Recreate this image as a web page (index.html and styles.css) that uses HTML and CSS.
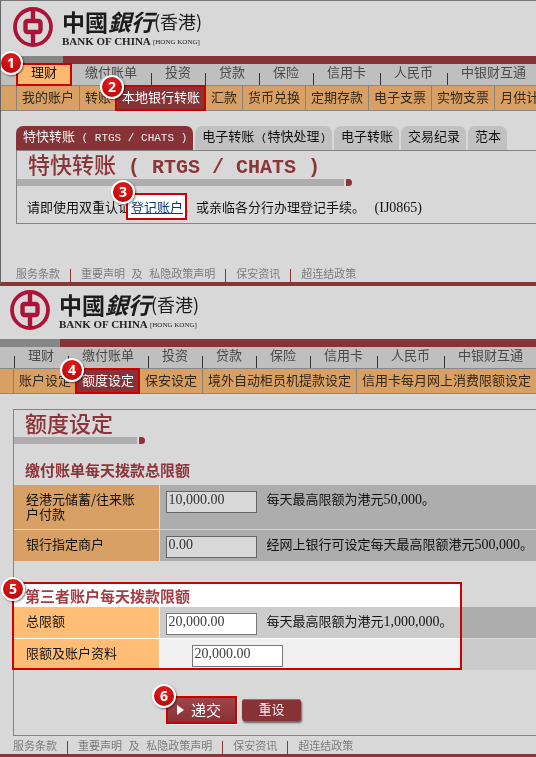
FILE: index.html
```html
<!DOCTYPE html>
<html lang="zh-CN">
<head>
<meta charset="utf-8">
<meta name="viewport" content="width=device-width, initial-scale=1">
<title>中国银行(香港)</title>
<link rel="stylesheet" href="styles.css">
</head>
<body>
<section class="panel panel-transfer">
  <header class="brand">
    <svg class="brand-mark" viewBox="0 0 40 40" aria-hidden="true">
      <circle cx="20" cy="20" r="18" fill="none" stroke="#ac1339" stroke-width="3.8"/>
      <rect x="12.5" y="14" width="15" height="11" rx="2" fill="none" stroke="#ac1339" stroke-width="4.4"/>
      <path d="M20 2v11M20 26v12" stroke="#ac1339" stroke-width="4.4"/>
    </svg>
    <div class="brand-text">
      <div class="brand-zh"><span class="brush">中國</span><span class="brush slant">銀行</span><span class="region">(香港)</span></div>
      <div class="brand-en">BANK OF CHINA <small>[HONG KONG]</small></div>
    </div>
  </header>
  <div class="strip"></div>
  <nav class="main-nav">
    <a class="current" href="#">理财<span class="badge">1</span></a>
    <a href="#">缴付账单</a>
    <a href="#">投资</a>
    <a href="#">贷款</a>
    <a href="#">保险</a>
    <a href="#">信用卡</a>
    <a href="#">人民币</a>
    <a href="#">中银财互通</a>
  </nav>
  <nav class="sub-nav">
    <a href="#">我的账户</a>
    <a href="#">转账</a>
    <a class="current" href="#">本地银行转账<span class="badge">2</span></a>
    <a href="#">汇款</a>
    <a href="#">货币兑换</a>
    <a href="#">定期存款</a>
    <a href="#">电子支票</a>
    <a href="#">实物支票</a>
    <a href="#">月供计</a>
  </nav>
  <main class="content">
    <div class="tabs">
      <a class="tab current" href="#">特快转账<span class="latin"> ( RTGS / CHATS )</span></a>
      <a class="tab" href="#">电子转账<span class="latin"> (</span>特快处理<span class="latin">)</span></a>
      <a class="tab" href="#">电子转账</a>
      <a class="tab" href="#">交易纪录</a>
      <a class="tab" href="#">范本</a>
    </div>
    <div class="box">
      <h1 class="title">特快转账<span class="title-latin"> ( RTGS / CHATS )</span></h1>
      <p class="message">请即使用双重认证<a class="register" href="#"><span class="register-text">登记账户</span><span class="badge">3</span></a><span class="stop">，</span>或亲临各分行办理登记手续<span class="stop">。</span><span class="num"> (IJ0865)</span></p>
    </div>
  </main>
  <footer class="footer">
    <a href="#">服务条款</a><a href="#">重要声明 及 私隐政策声明</a><a href="#">保安资讯</a><a href="#">超连结政策</a>
  </footer>
</section>

<section class="panel panel-limit">
  <header class="brand">
    <svg class="brand-mark" viewBox="0 0 40 40" aria-hidden="true">
      <circle cx="20" cy="20" r="18" fill="none" stroke="#ac1339" stroke-width="3.8"/>
      <rect x="12.5" y="14" width="15" height="11" rx="2" fill="none" stroke="#ac1339" stroke-width="4.4"/>
      <path d="M20 2v11M20 26v12" stroke="#ac1339" stroke-width="4.4"/>
    </svg>
    <div class="brand-text">
      <div class="brand-zh"><span class="brush">中國</span><span class="brush slant">銀行</span><span class="region">(香港)</span></div>
      <div class="brand-en">BANK OF CHINA <small>[HONG KONG]</small></div>
    </div>
  </header>
  <div class="strip"></div>
  <nav class="main-nav">
    <a href="#">理财</a>
    <a href="#">缴付账单</a>
    <a href="#">投资</a>
    <a href="#">贷款</a>
    <a href="#">保险</a>
    <a href="#">信用卡</a>
    <a href="#">人民币</a>
    <a href="#">中银财互通</a>
  </nav>
  <nav class="sub-nav">
    <a href="#">账户设定</a>
    <a class="current" href="#">额度设定<span class="badge">4</span></a>
    <a href="#">保安设定</a>
    <a href="#">境外自动柜员机提款设定</a>
    <a href="#">信用卡每月网上消费限额设定</a>
  </nav>
  <main class="content">
    <form class="box">
      <h1 class="title">额度设定</h1>
      <h2 class="group-title">缴付账单每天拨款总限额</h2>
      <table class="limits">
        <tr>
          <th scope="row"><label for="savings">经港元储蓄/往来账户付款</label></th>
          <td><div class="field"><input id="savings" type="text" value="10,000.00"><span class="note">每天最高限额为港元<span class="num">50,000</span><span class="stop">。</span></span></div></td>
        </tr>
        <tr>
          <th scope="row"><label for="merchant">银行指定商户</label></th>
          <td><div class="field"><input id="merchant" type="text" value="0.00"><span class="note">经网上银行可设定每天最高限额港元<span class="num">500,000</span><span class="stop">。</span></span></div></td>
        </tr>
      </table>
      <div class="third-party">
        <h2 class="group-title">第三者账户每天拨款限额</h2>
        <table class="limits">
          <tr>
            <th scope="row"><label for="total">总限额</label></th>
            <td><div class="field"><input id="total" type="text" value="20,000.00"><span class="note">每天最高限额为港元<span class="num">1,000,000</span><span class="stop">。</span></span></div></td>
          </tr>
          <tr class="light">
            <th scope="row"><label for="account">限额及账户资料</label></th>
            <td><div class="field indent"><input id="account" type="text" value="20,000.00"></div></td>
          </tr>
        </table>
        <div class="glow"></div>
        <div class="outline"><span class="badge">5</span></div>
      </div>
      <div class="actions">
        <button class="submit" type="button"><svg class="arrow" viewBox="0 0 7 10" aria-hidden="true"><path d="M0 0l7 5-7 5z" fill="#fff"/></svg>递交<span class="badge">6</span></button>
        <button class="reset" type="reset">重设</button>
      </div>
    </form>
  </main>
  <footer class="footer">
    <a href="#">服务条款</a><a href="#">重要声明 及 私隐政策声明</a><a href="#">保安资讯</a><a href="#">超连结政策</a>
  </footer>
</section>
</body>
</html>
```

FILE: styles.css
```css
* {
  box-sizing: border-box;
}

body {
  margin: 0;
  background: #d8d8d8;
  color: #111;
  font: 13px/16px "Noto Sans CJK SC", sans-serif;
}

a {
  color: inherit;
  text-decoration: none;
}

.panel {
  --red: #c00;
  --maroon: #873236;
  overflow: hidden;
  background: #d8d8d8;
}

.panel-transfer {
  --edge: 15px;
  border-top: 1px solid #777;
  border-left: 1px solid #666;
  border-bottom: 4px solid #843838;
}

.panel-limit {
  --edge: 13px;
  border-bottom: 3px solid #843838;
}

/* Brand */
.brand {
  display: flex;
  gap: 9px;
  padding: 6px 0 9px 12px;
}

.panel-limit .brand {
  padding: 4px 0 9px 10px;
}

.brand-mark {
  width: 40px;
  height: 40px;
}

.brand-text {
  height: 40px;
}

.brand-zh {
  display: flex;
  align-items: center;
  height: 28px;
  color: #1c1c1c;
  font-family: "Noto Sans CJK TC", sans-serif;
  white-space: nowrap;
}

.brush {
  font-size: 23px;
  font-weight: 700;
}

.slant {
  font-style: italic;
}

.region {
  font-size: 18px;
}

.brand-en {
  color: #222;
  font: bold 11px/12px "Liberation Serif", serif;
  white-space: nowrap;
}

.brand-en small {
  font-size: 7px;
  font-weight: 400;
  line-height: 7px;
  vertical-align: 1px;
}

.strip {
  height: 8px;
  background: linear-gradient(to right, #868686 calc(var(--edge) + 47px), var(--maroon) 0);
}

/* Navigation */
.main-nav,
.sub-nav {
  display: flex;
  padding-left: var(--edge);
  white-space: nowrap;
}

.main-nav {
  padding-left: calc(var(--edge) + 1px);
  background: #bfbfbf;
  border-bottom: 1px solid #888;
  color: #4a4a4a;
}

.main-nav a {
  flex: none;
  position: relative;
  padding: 0 13px 5px 14px;
  border-right: 1px solid transparent;
  background: linear-gradient(#333, #333) left bottom / 1px 12px no-repeat;
}

.main-nav .current {
  z-index: 2;
  background: #ffb870;
  color: #111;
  outline: 2px solid var(--red);
  outline-offset: -1px;
}

.sub-nav {
  background: #d8a064;
  border-bottom: 1px solid #888;
  color: #33291c;
}

.sub-nav a {
  flex: none;
  position: relative;
  padding: 3px 5px 5px;
  border-left: 1px solid #8c8273;
}

.sub-nav .current {
  z-index: 3;
  background: var(--maroon);
  border-left-color: var(--red);
  color: #fff;
  outline: 2px solid var(--red);
  outline-offset: -1px;
}

/* Numbered markers */
.badge {
  position: absolute;
  z-index: 5;
  width: 24px;
  height: 24px;
  border: 2px solid #fff;
  border-radius: 50%;
  background: radial-gradient(circle at 50% 30%, #e02020, #b80000);
  box-shadow: 1px 1px 2px #0008;
  color: #fff;
  font: bold 14px/20px "Open Sans", sans-serif;
  text-align: center;
}

.main-nav .badge {
  left: -18px;
  top: -13px;
}

.sub-nav .badge {
  left: -17px;
  top: -11px;
}

/* Content */
.content {
  padding: 15px 0 0 var(--edge);
}

.tabs {
  display: flex;
  gap: 2px;
  white-space: nowrap;
}

.tab {
  padding: 2px 6px 6px 7px;
  border-radius: 7px 7px 0 0;
  background: #c1c1c1;
}

.tab.current {
  background: var(--maroon);
  color: #eee;
}

.latin {
  font: 11px/11px "Liberation Mono", monospace;
}

.box {
  border: 1px solid #848484;
  border-right: 0;
}

/* The grey rule runs under the heading and ends in a rounded dot */
.title {
  position: relative;
  width: fit-content;
  margin: 0;
  padding: 0 32px 10px 11px;
  background: linear-gradient(#adadad, #adadad) left bottom / calc(100% - 8px) 7px no-repeat;
  color: #8b3439;
  font-size: 22px;
  font-weight: 500;
  line-height: 24px;
  white-space: pre;
}

.title::after {
  content: "";
  position: absolute;
  right: 0;
  bottom: 0;
  width: 6px;
  height: 7px;
  border-radius: 1px 4px 4px 1px;
  background: #8b3439;
}

.title-latin {
  font: bold 20px/16px "Liberation Mono", monospace;
}

.message {
  margin: 0;
  padding: 13px 0 8px 10px;
  white-space: nowrap;
}

.num {
  font: 14px/14px "Liberation Serif", serif;
}

.message .num {
  padding-left: 6px;
}

.stop {
  font-family: "Noto Sans CJK TC", sans-serif;
}

.register {
  position: relative;
  z-index: 1;
  color: #0c3b85;
}

.register::before {
  content: "";
  position: absolute;
  inset: -4px -4px -4px -5px;
  border: 2px solid var(--red);
  background: #fff;
}

.register-text {
  position: relative;
  text-decoration: underline;
}

.register .badge {
  left: -20px;
  top: -17px;
}

/* Limit tables */
.group-title {
  margin: 0;
  padding-left: 11px;
  color: #8b3439;
  font-size: 15px;
  font-weight: 700;
  line-height: 22px;
}

.title + .group-title {
  padding-top: 15px;
  padding-bottom: 4px;
}

.limits {
  width: 100%;
  border-collapse: collapse;
}

.limits th {
  width: 145px;
  padding: 6px 16px 8px 12px;
  border-right: 1px solid #d8d8d8;
  background: #d8a064;
  font-weight: 400;
  line-height: 15px;
  text-align: left;
  vertical-align: top;
}

.limits td {
  padding: 6px 0 3px 6px;
  background: #adadad;
  vertical-align: top;
}

.limits tr + tr {
  border-top: 1px solid #d8d8d8;
}

.light td {
  background: #cbcbcb;
}

.field {
  display: flex;
  gap: 10px;
  white-space: nowrap;
}

.indent {
  padding-left: 26px;
}

.field input {
  width: 91px;
  height: 22px;
  margin: 0;
  padding: 0 2px 4px;
  border: 1px solid #666;
  border-radius: 0;
  background: #d8d8d8;
  color: #333;
  font: 14px/16px "Liberation Serif", serif;
}

/* Spotlight around the third-party limits */
.third-party {
  position: relative;
  margin-top: 24px;
}

.glow,
.outline {
  position: absolute;
  inset: -3px auto 0 -2px;
  width: 450px;
  pointer-events: none;
}

.glow {
  background: #272727;
  mix-blend-mode: color-dodge;
}

.outline {
  border: 2px solid var(--red);
}

.outline .badge {
  left: -13px;
  top: -7px;
}

/* Actions */
.actions {
  display: flex;
  align-items: center;
  gap: 5px;
  padding: 26px 0 11px 152px;
}

button {
  margin: 0;
  border: 0;
  background: var(--maroon);
  color: #eee;
  font: 13px/16px "Noto Sans CJK SC", sans-serif;
}

.submit {
  position: relative;
  display: flex;
  align-items: center;
  gap: 7px;
  width: 71px;
  height: 28px;
  padding: 0 0 0 9px;
  border: 2px solid var(--red);
  background: linear-gradient(#a04448, #873236);
  box-shadow: 1px 1px 0 #fff;
  color: #fff;
  font-size: 15px;
}

.arrow {
  width: 7px;
  height: 10px;
}

.submit .badge {
  left: -16px;
  top: -14px;
}

.reset {
  width: 59px;
  height: 22px;
  padding: 0 0 2px;
  border-radius: 3px;
  box-shadow: inset 0 1px #a66, 1px 2px 2px #0008;
}

/* Footer */
.footer {
  display: flex;
  padding: 5px 0 0 var(--edge);
  color: #7c7c7c;
  font: 11px/13px "Liberation Mono", "Noto Sans CJK SC", monospace;
  white-space: nowrap;
}

.panel-transfer .footer {
  padding-top: 45px;
}

.footer a {
  height: 13px;
  padding-right: 10px;
}

.footer a + a {
  padding-left: 10px;
  border-left: 1px solid #8b3439;
}
```
